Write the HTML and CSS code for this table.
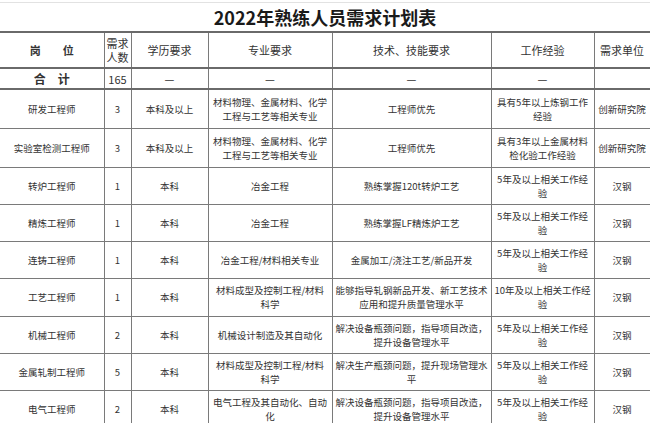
FILE: index.html
```html
<!DOCTYPE html>
<html lang="zh">
<head>
<meta charset="utf-8">
<link rel="stylesheet" href="styles.css">
</head>
<body>
<div class="sheet">
  <div class="title">2022年熟练人员需求计划表</div>
  <table class="plan">
    <colgroup>
      <col class="c1"><col class="c2"><col class="c3"><col class="c4"><col class="c5"><col class="c6"><col class="c7">
    </colgroup>
    <thead>
      <tr class="head">
        <th class="strong">岗&emsp;&emsp;位</th>
        <th class="narrow">需求<br>人数</th>
        <th>学历要求</th>
        <th>专业要求</th>
        <th>技术、技能要求</th>
        <th>工作经验</th>
        <th>需求单位</th>
      </tr>
    </thead>
    <tbody>
      <tr class="total">
        <td class="strong big">合&emsp;计</td>
        <td class="num">165</td>
        <td>—</td>
        <td>—</td>
        <td>—</td>
        <td>—</td>
        <td></td>
      </tr>
      <tr class="r39">
        <td>研发工程师</td><td>3</td><td>本科及以上</td>
        <td>材料物理、金属材料、化学<br>工程与工艺等相关专业</td>
        <td>工程师优先</td>
        <td>具有5年以上炼钢工作<br>经验</td>
        <td>创新研究院</td>
      </tr>
      <tr class="r39">
        <td>实验室检测工程师</td><td>3</td><td>本科及以上</td>
        <td>材料物理、金属材料、化学<br>工程与工艺等相关专业</td>
        <td>工程师优先</td>
        <td>具有3年以上金属材料<br>检化验工作经验</td>
        <td>创新研究院</td>
      </tr>
      <tr>
        <td>转炉工程师</td><td>1</td><td>本科</td>
        <td>冶金工程</td>
        <td>熟练掌握120t转炉工艺</td>
        <td>5年及以上相关工作经<br>验</td>
        <td>汉钢</td>
      </tr>
      <tr>
        <td>精炼工程师</td><td>1</td><td>本科</td>
        <td>冶金工程</td>
        <td>熟练掌握LF精炼炉工艺</td>
        <td>5年及以上相关工作经<br>验</td>
        <td>汉钢</td>
      </tr>
      <tr>
        <td>连铸工程师</td><td>1</td><td>本科</td>
        <td>冶金工程/材料相关专业</td>
        <td>金属加工/浇注工艺/新品开发</td>
        <td>5年及以上相关工作经<br>验</td>
        <td>汉钢</td>
      </tr>
      <tr class="r38">
        <td>工艺工程师</td><td>1</td><td>本科</td>
        <td>材料成型及控制工程/材料<br>科学</td>
        <td>能够指导轧钢新品开发、新工艺技术<br>应用和提升质量管理水平</td>
        <td>10年及以上相关工作经<br>验</td>
        <td>汉钢</td>
      </tr>
      <tr>
        <td>机械工程师</td><td>2</td><td>本科</td>
        <td>机械设计制造及其自动化</td>
        <td>解决设备瓶颈问题，指导项目改造，<br>提升设备管理水平</td>
        <td>5年及以上相关工作经<br>验</td>
        <td>汉钢</td>
      </tr>
      <tr>
        <td>金属轧制工程师</td><td>5</td><td>本科</td>
        <td>材料成型及控制工程/材料<br>科学</td>
        <td>解决生产瓶颈问题，提升现场管理水<br>平</td>
        <td>5年及以上相关工作经<br>验</td>
        <td>汉钢</td>
      </tr>
      <tr>
        <td>电气工程师</td><td>2</td><td>本科</td>
        <td>电气工程及其自动化、自动<br>化</td>
        <td>解决设备瓶颈问题，指导项目改造，<br>提升设备管理水平</td>
        <td>5年及以上相关工作经<br>验</td>
        <td>汉钢</td>
      </tr>
    </tbody>
  </table>
</div>
</body>
</html>
```

FILE: styles.css
```css
html, body {
  margin: 0;
  padding: 0;
  background: #ffffff;
}

body {
  font-family: "Noto Sans CJK SC", "Noto Sans", sans-serif;
  color: #333333;
  overflow: hidden;
}

.sheet {
  width: 650px;
  padding-top: 2px;
}

.title {
  border-top: 1px solid #e2e2e2;
  height: 28px;
  line-height: 29px;
  text-align: center;
  font-size: 18px;
  font-weight: 700;
  color: #1a1a1a;
}

.plan {
  width: 650px;
  table-layout: fixed;
  border-collapse: collapse;
}

.c1 { width: 104px; }
.c2 { width: 27px; }
.c3 { width: 77px; }
.c4 { width: 124px; }
.c5 { width: 159px; }
.c6 { width: 103px; }
.c7 { width: 56px; }

.plan th,
.plan td {
  border: 1px solid #7a7a7a;
  padding: 0;
  text-align: center;
  vertical-align: middle;
  font-size: 9.5px;
  line-height: 14px;
  font-weight: 400;
  white-space: nowrap;
  overflow: hidden;
}

.plan tr > :first-child {
  border-left: none;
}

.plan tr > :last-child {
  border-right: 1px solid #7a7a7a;
}

.head th {
  height: 34px;
  font-size: 11px;
  border-top: 2px solid #6a6a6a;
  border-bottom: 2px solid #6a6a6a;
}

.head .narrow {
  font-size: 11px;
  line-height: 14px;
}

.strong {
  font-weight: 700 !important;
}

.total td {
  font-size: 11px;
  line-height: 16px;
  border-bottom: 2px solid #6a6a6a;
}

.total .big {
  font-size: 12px;
}

tbody tr {
  height: 37px;
}

tbody tr.r39 {
  height: 39px;
}

tbody tr.r38 {
  height: 38px;
}

tbody tr.total {
  height: 21px;
}
```
